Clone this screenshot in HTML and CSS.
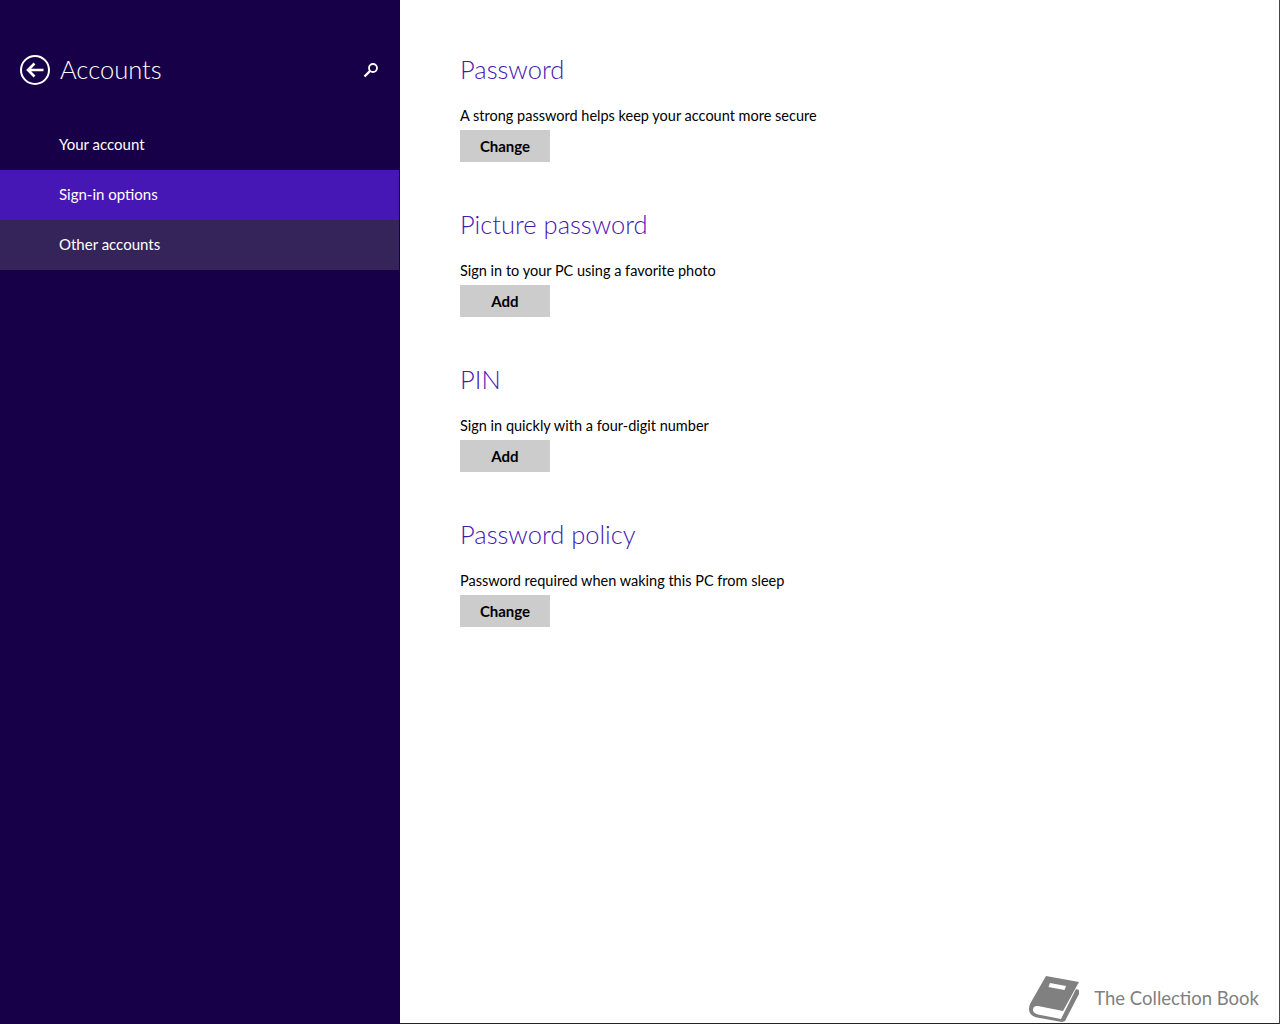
FILE: index.html
```html
<!DOCTYPE html>
<html lang="en">
<head>
<meta charset="utf-8">
<title>Accounts</title>
<link rel="stylesheet" href="styles.css">
</head>
<body>
<div class="app">
  <aside class="sidebar">
    <header class="side-head">
      <svg class="back" width="32" height="32" viewBox="0 0 32 32" fill="none" stroke="#fff">
        <circle cx="16" cy="16" r="14" stroke-width="2"/>
        <path d="M24.5 16H9M15.5 9.5 9 16l6.500 6.500" stroke-width="2.6"/>
      </svg>
      <h1 class="side-title">Accounts</h1>
      <svg class="search" width="16" height="16" viewBox="0 0 16 16" fill="none" stroke="#fff">
        <circle cx="10" cy="6" r="4" stroke-width="1.8"/>
        <path d="M7 9 1.500 14.500" stroke-width="2.4"/>
      </svg>
    </header>
    <nav class="side-nav">
      <a class="nav-item">Your account</a>
      <a class="nav-item active">Sign-in options</a>
      <a class="nav-item hover">Other accounts</a>
    </nav>
  </aside>
  <main class="content">
    <section class="group">
      <h2 class="group-title">Password</h2>
      <p class="group-text">A strong password helps keep your account more secure</p>
      <button class="btn">Change</button>
    </section>
    <section class="group">
      <h2 class="group-title">Picture password</h2>
      <p class="group-text">Sign in to your PC using a favorite photo</p>
      <button class="btn">Add</button>
    </section>
    <section class="group">
      <h2 class="group-title">PIN</h2>
      <p class="group-text">Sign in quickly with a four-digit number</p>
      <button class="btn">Add</button>
    </section>
    <section class="group">
      <h2 class="group-title">Password policy</h2>
      <p class="group-text">Password required when waking this PC from sleep</p>
      <button class="btn">Change</button>
    </section>
    <div class="watermark">
      <svg class="book" width="51" height="46" viewBox="0 0 51 46">
        <path fill="#808080" d="M17 0 50 6 34 35 9 30C5 29.500 4 32 4 34s2 4 5 4.500L32 43l13-26 2-4 3 1v4L36 45l-3 1-25-4.500C3 40.500 0 37 0 33c0-2 .5-4 1.500-6Z"/>
        <path fill="#fff" d="M21 7 37 10 35.500 14 19.500 11Z"/>
      </svg>
      <span class="mark-text">The Collection Book</span>
    </div>
  </main>
</div>
</body>
</html>
```
FILE: styles.css
```css
* { box-sizing: border-box; }
html, body { margin: 0; height: 100%; }
body { font-family: "Lato", "Open Sans", sans-serif; background: #fff; }
.app { display: flex; height: 1024px; width: 1280px; overflow: hidden; }
.sidebar { width: 400px; flex: none; background: #180048; color: #fff; padding-right: 1px; }
.side-head { display: flex; align-items: center; height: 139px; padding: 0 20px 0 19px; }
.back { flex: none; margin-right: 9px; }
.side-title { flex: 1; margin: 0 0 2px; font-size: 25.500px; font-weight: 300; }
.search { flex: none; }
.side-nav { display: flex; flex-direction: column; margin-top: -19px; }
.nav-item { display: flex; align-items: center; height: 50px; padding: 0 0 2px 59px; font-size: 15px; }
.active { background: #4617b4; }
.hover { background: #34245a; }
.content { position: relative; flex: 1; padding: 45px 60px 0; border-bottom: 1px solid #222; border-right: 1px solid #444; }
.group { height: 155px; }
.group-title { margin: 0; height: 48px; font-size: 25.500px; line-height: 48px; font-weight: 300; color: #4617b4; }
.group-text { margin: 12px 0 0; height: 25px; font-size: 14.500px; line-height: 22px; color: #000; }
.btn { display: block; width: 90px; height: 32px; padding: 0; border: 0; background: #ccc; color: #000; font: 700 15px "Lato", sans-serif; }
.watermark { position: absolute; right: 20px; bottom: 1px; display: flex; align-items: center; gap: 14px; height: 46px; color: #808080; }
.book { flex: none; }
.mark-text { font-size: 18.500px; margin-bottom: 3px; }
```
